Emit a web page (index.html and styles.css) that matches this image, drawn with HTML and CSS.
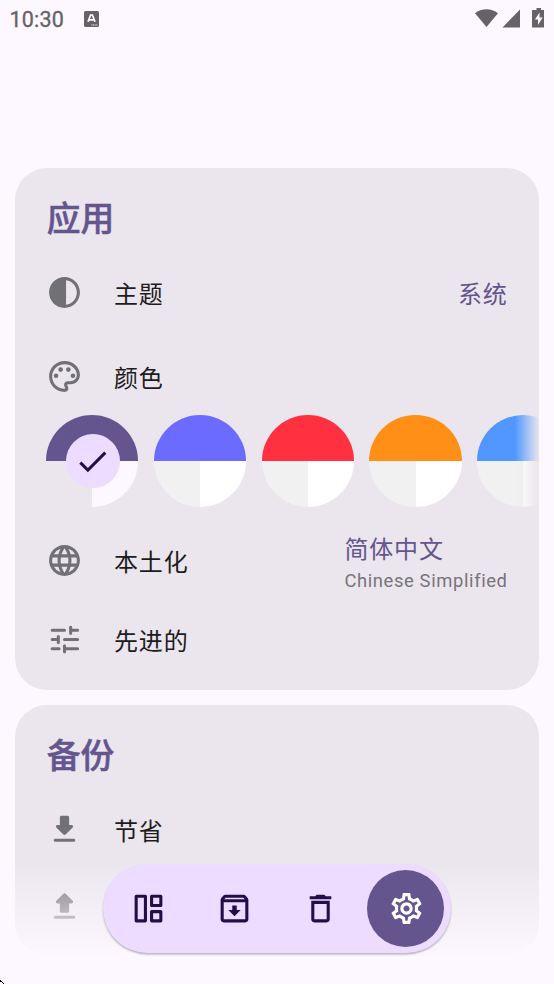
FILE: index.html
```html
<!DOCTYPE html>
<html lang="zh-CN">
<head>
<meta charset="utf-8">
<title>设置</title>
<link rel="stylesheet" href="styles.css">
</head>
<body>
<header class="status">
  <span class="clock">10:30</span>
  <svg class="keyboard" width="15" height="16" viewBox="0 0 15 16"><rect width="15" height="16" rx="1.6" fill="#656367"/><path d="M4 10.8 6.6 4h1.8L11 10.8M5 8.8h5" fill="none" stroke="#fff" stroke-width="1.7"/><path d="M7.5 14h6" stroke="#fff" stroke-width="1" stroke-dasharray="1 .6"/></svg>
  <svg class="signals" width="72" height="22" viewBox="0 0 72 22" fill="#656367"><path d="M1 5.2C7.5-.2 17.500-.2 24 5.200L12.500 19z"/><path d="M46 1.500V19.500H28.500z"/><path d="M59.500 2h3V0h4.500v2h3v17.500H58V2z"/><path d="M65.500 4.500 61 11.500h3v5.500l4.600-7.500h-3.100z" fill="#fdf8ff"/></svg>
</header>

<main class="settings">
  <section class="card">
    <h2 class="title">应用</h2>
    <div class="row">
      <svg class="icon" viewBox="0 0 24 24"><path d="M12 22c5.520 0 10-4.480 10-10S17.520 2 12 2 2 6.480 2 12s4.480 10 10 10zm1-17.930c3.940.490 7 3.850 7 7.930s-3.050 7.440-7 7.930V4.070z"/></svg>
      <span class="label">主题</span>
      <span class="value">系统</span>
    </div>
    <div class="row palette-row">
      <svg class="icon" viewBox="0 0 24 24"><path d="M12 22C6.490 22 2 17.510 2 12S6.490 2 12 2s10 4.040 10 9c0 3.310-2.690 6-6 6h-1.770c-.280 0-.500.220-.500.500 0 .120.050.230.130.330.410.470.640 1.060.640 1.670A2.500 2.500 0 0 1 12 22zm0-18c-4.410 0-8 3.590-8 8s3.590 8 8 8c.280 0 .500-.220.500-.500a.540.540 0 0 0-.140-.350c-.410-.460-.630-1.050-.630-1.650a2.500 2.500 0 0 1 2.500-2.500H16c2.210 0 4-1.790 4-4 0-3.860-3.590-7-8-7z"/><circle cx="6.500" cy="11.500" r="1.500"/><circle cx="9.500" cy="7.500" r="1.500"/><circle cx="14.500" cy="7.500" r="1.500"/><circle cx="17.500" cy="11.500" r="1.500"/></svg>
      <span class="label">颜色</span>
    </div>
    <div class="swatches">
      <div class="swatch violet"><span class="check"><svg class="tick" viewBox="0 0 24 24"><path d="M9 16.170 4.830 12l-1.420 1.410L9 19 21 7l-1.410-1.410z"/></svg></span></div>
      <div class="swatch indigo"></div>
      <div class="swatch red"></div>
      <div class="swatch orange"></div>
      <div class="swatch blue"></div>
    </div>
    <div class="row locale-row">
      <svg class="icon" viewBox="0 0 24 24"><path d="M11.990 2C6.470 2 2 6.480 2 12s4.470 10 9.990 10C17.520 22 22 17.520 22 12S17.520 2 11.990 2zm6.930 6h-2.950a15.650 15.650 0 0 0-1.380-3.560A8.030 8.030 0 0 1 18.920 8zM12 4.040c.830 1.200 1.480 2.530 1.910 3.960h-3.820c.430-1.430 1.080-2.760 1.910-3.960zM4.260 14C4.100 13.360 4 12.690 4 12s.100-1.360.260-2h3.380c-.080.660-.140 1.320-.140 2s.060 1.340.140 2H4.260zm.820 2h2.950c.320 1.250.780 2.450 1.380 3.560A7.987 7.987 0 0 1 5.080 16zm2.950-8H5.080a7.987 7.987 0 0 1 4.330-3.560A15.650 15.650 0 0 0 8.030 8zM12 19.960c-.830-1.200-1.480-2.530-1.910-3.960h3.820c-.430 1.430-1.080 2.760-1.910 3.960zM14.340 14H9.660c-.090-.660-.160-1.320-.160-2s.070-1.350.160-2h4.680c.090.650.160 1.320.160 2s-.070 1.340-.160 2zm.250 5.560c.600-1.110 1.060-2.310 1.380-3.560h2.950a8.030 8.030 0 0 1-4.330 3.560zM16.360 14c.080-.660.140-1.320.140-2s-.060-1.340-.140-2h3.380c.160.640.260 1.310.260 2s-.100 1.360-.260 2h-3.380z"/></svg>
      <span class="label">本土化</span>
      <span class="value stacked">简体中文<small class="hint">Chinese Simplified</small></span>
    </div>
    <div class="row">
      <svg class="icon line" viewBox="0 0 24 24"><path d="M4 6h8M16 6h4.500M16 4v4M4 12h4M8 10v4M12 12h8.500M4 18h4.500M12 18h8.500M12 16v4"/></svg>
      <span class="label">先进的</span>
    </div>
  </section>

  <section class="card backup">
    <h2 class="title">备份</h2>
    <div class="row">
      <svg class="icon" viewBox="0 0 24 24"><path d="M16.590 9H15V4c0-.550-.450-1-1-1h-4c-.550 0-1 .450-1 1v5H7.410c-.890 0-1.340 1.080-.710 1.710l4.590 4.590c.390.390 1.020.390 1.410 0l4.590-4.590c.630-.630.190-1.710-.700-1.710zM5 19c0 .550.450 1 1 1h12c.550 0 1-.450 1-1s-.450-1-1-1H6c-.550 0-1 .450-1 1z"/></svg>
      <span class="label">节省</span>
    </div>
    <div class="row restore-row">
      <svg class="icon" viewBox="0 0 24 24"><path d="M7.400 10h1.590v5c0 .550.450 1 1 1h4c.550 0 1-.450 1-1v-5h1.590c.890 0 1.340-1.080.710-1.710L12.700 3.700a.996.996 0 0 0-1.410 0L6.700 8.290c-.630.630-.190 1.710.700 1.710zM5 19c0 .550.450 1 1 1h12c.550 0 1-.450 1-1s-.450-1-1-1H6c-.550 0-1 .450-1 1z"/></svg>
    </div>
  </section>
</main>

<div class="fade"></div>
<nav class="dock">
  <span class="tab"><svg class="glyph" viewBox="0 0 24 24"><path d="M4 4h6v16H4zM14 4h6v6h-6zM14 14h6v6h-6z" fill="none" stroke="currentColor" stroke-width="2" stroke-linejoin="round"/></svg></span>
  <span class="tab"><svg class="glyph" viewBox="0 0 24 24"><path d="m20.540 5.230-1.390-1.680C18.880 3.210 18.470 3 18 3H6c-.470 0-.880.210-1.160.550L3.460 5.230C3.170 5.570 3 6.020 3 6.500V19c0 1.100.900 2 2 2h14c1.100 0 2-.900 2-2V6.500c0-.480-.170-.930-.460-1.270zM6.240 5h11.520l.830 1H5.420l.820-1zM5 19V8h14v11H5zm8.450-9h-2.900v3H8l4 4 4-4h-2.550z"/></svg></span>
  <span class="tab"><svg class="glyph" viewBox="0 0 24 24"><path d="M6 19c0 1.100.900 2 2 2h8c1.100 0 2-.900 2-2V7H6v12zM8 9h8v10H8V9zm7.500-5-1-1h-5l-1 1H5v2h14V4z"/></svg></span>
  <span class="tab active"><svg class="glyph" viewBox="0 0 24 24"><path d="M19.430 12.980c.040-.320.070-.640.070-.980s-.030-.660-.070-.980l2.110-1.650c.190-.150.240-.420.120-.640l-2-3.460a.5.5 0 0 0-.610-.220l-2.490 1c-.520-.400-1.080-.730-1.690-.980l-.380-2.650A.488.488 0 0 0 14 2h-4c-.250 0-.460.180-.490.420l-.380 2.650c-.610.250-1.170.590-1.690.980l-2.490-1a.5.5 0 0 0-.610.220l-2 3.460c-.130.220-.070.490.120.640l2.110 1.650c-.040.320-.070.650-.070.980s.030.660.070.980l-2.110 1.650c-.190.150-.240.420-.120.640l2 3.460a.5.5 0 0 0 .610.220l2.490-1c.520.400 1.080.730 1.690.980l.380 2.650c.030.240.240.420.490.420h4c.250 0 .460-.180.490-.420l.380-2.650c.610-.250 1.170-.590 1.690-.980l2.490 1a.5.5 0 0 0 .610-.220l2-3.460c.120-.220.070-.490-.120-.640l-2.110-1.650zm-1.980-1.710c.040.310.050.520.050.730s-.020.430-.050.730l-.140 1.130.890.700 1.080.840-.700 1.210-1.270-.510-1.040-.420-.900.680c-.430.320-.840.560-1.250.730l-1.060.430-.160 1.130-.200 1.350h-1.400l-.350-2.480-1.060-.430c-.430-.180-.830-.410-1.230-.710l-.910-.700-1.060.430-1.270.510-.700-1.210 1.970-1.540-.140-1.130c-.030-.310-.050-.540-.050-.740s.020-.430.050-.730l.140-1.130-1.970-1.540.700-1.210 2.310.93.900-.680c.430-.320.840-.560 1.250-.730l1.060-.430.360-2.480h1.390l.350 2.480 1.060.43c.430.180.830.410 1.230.710l.910.700 2.330-.94.700 1.210-1.960 1.550.14 1.130zM12 8c-2.210 0-4 1.790-4 4s1.790 4 4 4 4-1.790 4-4-1.790-4-4-4zm0 6c-1.100 0-2-.900-2-2s.900-2 2-2 2 .900 2 2-.900 2-2 2z"/></svg></span>
</nav>
<svg class="pointer" width="4" height="4" viewBox="0 0 4 4"><path d="M0 0h1v1h1v1h1v1h1v1H3V3H2V2H0z"/></svg>
</body>
</html>
```
FILE: styles.css
```css
* { box-sizing: border-box; }

body {
  position: relative;
  width: 554px;
  height: 984px;
  margin: 0;
  overflow: hidden;
  background: #fdf8ff;
  color: #1c1b20;
  font-family: Roboto, "Noto Sans CJK SC", sans-serif;
}

.status {
  display: flex;
  align-items: center;
  height: 38px;
  padding: 0 8px 0 9.5px;
  color: #656367;
}

.clock {
  width: 74.5px;
  font-size: 21.5px;
  font-weight: 400;
  letter-spacing: 0.2px;
  -webkit-text-stroke: 0.35px currentColor;
}

.signals { margin-left: auto; }

.settings {
  display: flex;
  flex-direction: column;
  gap: 15px;
  padding: 130px 15.4px 0;
}

.card {
  height: 522px;
  overflow: hidden;
  border-radius: 32px;
  background: #ebe6ed;
}

.backup { height: 250px; }

.title {
  height: 100px;
  margin: 0;
  padding: 2px 0 0 31.3px;
  color: #64558f;
  font-size: 33.8px;
  font-weight: 500;
  line-height: 100px;
  -webkit-text-stroke: 0.5px currentColor;
}

.row {
  display: flex;
  align-items: center;
  height: 48px;
  padding: 0 31px 0 30.8px;
}

.palette-row { margin-top: 36px; }
.locale-row { height: 107px; margin-bottom: 1px; }
.restore-row { margin-top: 29px; }

.icon {
  width: 37px;
  height: 37px;
  margin-right: 30.8px;
  fill: #717074;
}

.line {
  fill: none;
  stroke: #717074;
  stroke-width: 2;
  stroke-linecap: round;
}

.label, .value {
  padding-top: 5px;
  font-size: 24px;
  letter-spacing: 0.85px;
  line-height: 32px;
}

.value {
  margin-left: auto;
  color: #64558f;
}

.stacked {
  display: flex;
  flex-direction: column;
  padding-top: 9px;
}

.hint {
  margin-top: -1px;
  color: #77747b;
  font-size: 18.4px;
  font-weight: 400;
  letter-spacing: 0.62px;
}

.swatches {
  display: flex;
  gap: 15.4px;
  margin-top: 15px;
  padding-left: 30.8px;
  overflow: hidden;
  mask-image: linear-gradient(to right, #000 calc(100% - 24px), transparent);
}

.swatch {
  flex: none;
  display: flex;
  align-items: center;
  justify-content: center;
  width: 92.3px;
  height: 92px;
  border-radius: 50%;
  background: conic-gradient(var(--tone) 25%, var(--right, #fff) 0 50%, var(--left, #f1f1f1) 0 75%, var(--tone) 0);
}

.violet { --tone: #64558f; --right: #fdf8ff; --left: #ebe6ed; }
.indigo { --tone: #6c6bff; }
.red { --tone: #ff3040; }
.orange { --tone: #ff8f17; }
.blue { --tone: #5197ff; }

.check {
  display: flex;
  align-items: center;
  justify-content: center;
  width: 54px;
  height: 54px;
  margin-left: 0.6px;
  border-radius: 50%;
  background: #eddcff;
}

.tick {
  width: 37px;
  height: 37px;
  fill: #240e49;
}

.fade {
  position: absolute;
  inset: 861px 0 0;
  background: linear-gradient(rgba(253, 248, 255, 0), #fdf8ff 98px);
}

.dock {
  position: absolute;
  top: 864px;
  left: 103px;
  display: flex;
  align-items: center;
  gap: 9px;
  width: 348px;
  height: 89px;
  padding: 0 6px;
  border-radius: 45px;
  background: #eddcff;
  box-shadow: 0 1.5px 2px rgba(0, 0, 0, 0.28);
  color: #240e49;
}

.tab {
  display: flex;
  align-items: center;
  justify-content: center;
  width: 77px;
  height: 77px;
  border-radius: 50%;
}

.active {
  background: #64558f;
  color: #fff;
}

.glyph {
  width: 37px;
  height: 37px;
  margin-left: 1px;
  fill: currentColor;
}

.pointer {
  position: absolute;
  left: 0;
  bottom: 0;
}
```
